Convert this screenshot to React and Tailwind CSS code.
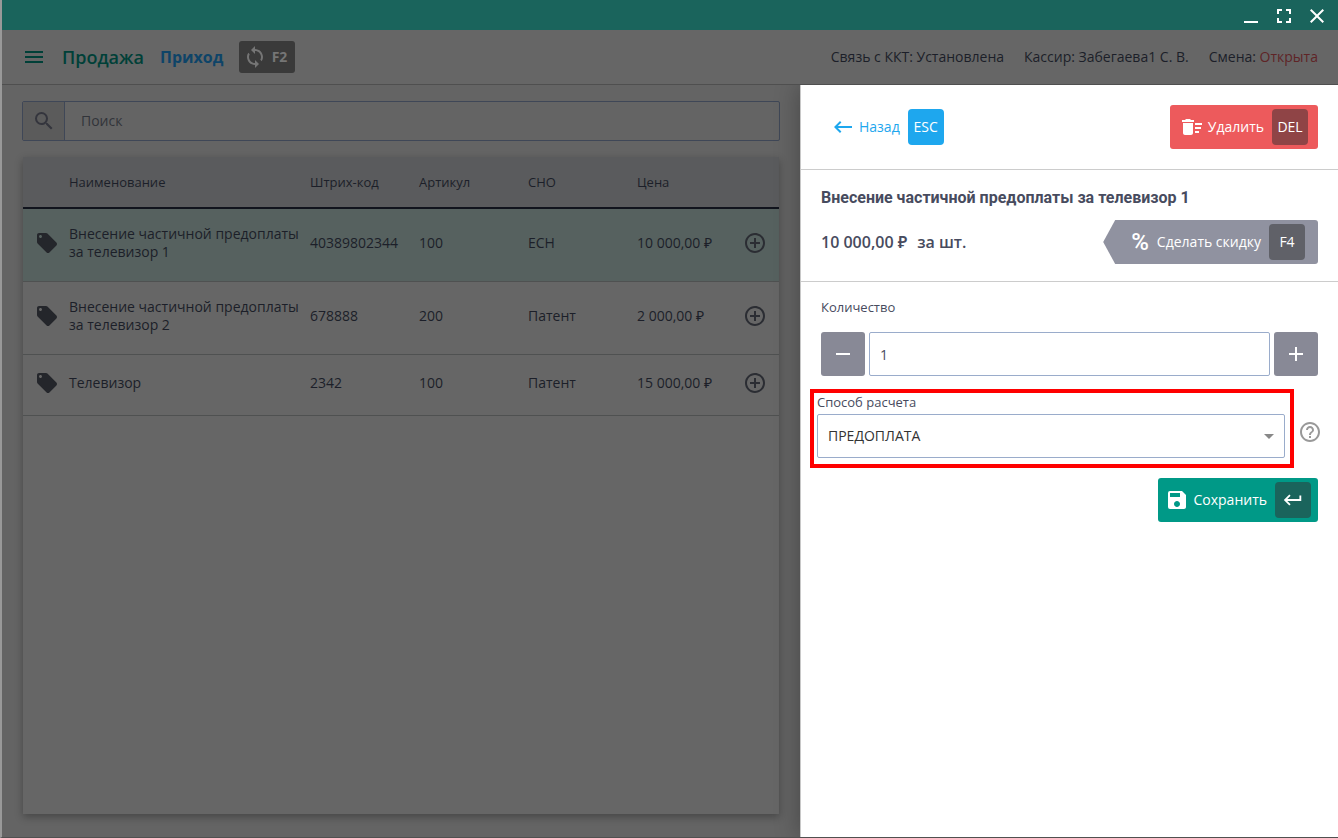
import {
  MdAddCircleOutline,
  MdArrowDropDown,
  MdClose,
  MdDeleteSweep,
  MdFullscreen,
  MdHelpOutline,
  MdKeyboardBackspace,
  MdKeyboardReturn,
  MdLocalOffer,
  MdLoop,
  MdMenu,
  MdSave,
  MdSearch,
} from "react-icons/md";

const products = [
  { id: 1, name: "Внесение частичной предоплаты за телевизор 1", barcode: "40389802344", article: "100", tax: "ЕСН", price: "10 000,00 ₽" },
  { id: 2, name: "Внесение частичной предоплаты за телевизор 2", barcode: "678888", article: "200", tax: "Патент", price: "2 000,00 ₽" },
  { id: 3, name: "Телевизор", barcode: "2342", article: "100", tax: "Патент", price: "15 000,00 ₽" },
];

const keyClass = "flex h-9 w-9 items-center justify-center rounded";
const stepBtn = "flex h-11 w-11 shrink-0 items-center justify-center rounded-[3px] bg-[#888996] text-white";

function TitleBar() {
  return (
    <div className="flex h-[30px] items-center justify-end gap-[9px] bg-[#1a645c] pt-0.5 pr-[9px] text-white">
      <button aria-label="Свернуть">
        <svg width="24" height="24" viewBox="0 0 24 24" fill="currentColor">
          <path d="M5 17h14v2H5z" />
        </svg>
      </button>
      <button aria-label="Развернуть">
        <MdFullscreen size={24} />
      </button>
      <button aria-label="Закрыть">
        <MdClose size={24} />
      </button>
    </div>
  );
}

function Header() {
  return (
    <header className="flex h-[55px] items-center justify-between border-b border-[#4f4f4f] pr-5 pl-5">
      <div className="flex items-center">
        <button aria-label="Меню" className="text-[#004038]">
          <MdMenu size={24} />
        </button>
        <h1 className="ml-4 text-lg font-semibold text-[#004038]">Продажа</h1>
        <a href="#income" className="ml-4 text-base font-bold text-[#0e4468]">
          Приход
        </a>
        <button className="ml-4 flex h-8 w-14 items-center justify-between rounded-[3px] bg-[#3a3a3a] pr-2 pl-1 text-sm font-bold text-[#757575]">
          <MdLoop size={24} />
          F2
        </button>
      </div>
      <div className="flex gap-5 text-sm text-[#1c1f29]">
        <span>Связь с ККТ: Установлена</span>
        <span>Кассир: Забегаева1 С. В.</span>
        <span>
          Смена: <span className="text-[#5f2426]">Открыта</span>
        </span>
      </div>
    </header>
  );
}

function Products() {
  return (
    <section className="flex min-w-0 flex-1 flex-col px-5 pt-4 pb-[23px]">
      <label className="flex h-10 rounded-[2px] border border-[#3f4757]">
        <span className="flex w-[42px] items-center justify-center border-r border-[#3f4757] bg-[#5b5b5b] text-[#34353d]">
          <MdSearch size={24} />
        </span>
        <input
          type="text"
          placeholder="Поиск"
          aria-label="Поиск"
          className="min-w-0 flex-1 px-4 text-sm outline-none placeholder:text-[#32343a]"
        />
      </label>

      <div className="mx-px mt-4 flex-1 bg-[#666] shadow-[0_3px_8px_rgba(0,0,0,0.3)]">
        <table className="w-full table-fixed text-left text-sm leading-[18px] text-[#1c1f29]">
          <colgroup>
            <col className="w-[46px]" />
            <col />
            <col className="w-[109px]" />
            <col className="w-[109px]" />
            <col className="w-[109px]" />
            <col className="w-[108px]" />
            <col className="w-[34px]" />
          </colgroup>
          <thead>
            <tr className="h-[51px] border-b-2 border-[#11141d] bg-[#5a5b5d] text-[13px]">
              <th></th>
              <th className="font-normal">Наименование</th>
              <th className="font-normal">Штрих-код</th>
              <th className="font-normal">Артикул</th>
              <th className="font-normal">СНО</th>
              <th className="font-normal">Цена</th>
              <th></th>
            </tr>
          </thead>
          <tbody>
            {products.map((item) => (
              <tr key={item.id} className="border-b border-[#4f5151] first:bg-[#56615f]">
                <td className="pt-4 pb-5 pl-3 text-[#24262b]">
                  <MdLocalOffer size={24} />
                </td>
                <td className="pt-4 pb-5">{item.name}</td>
                <td className="pt-4 pb-5">{item.barcode}</td>
                <td className="pt-4 pb-5">{item.article}</td>
                <td className="pt-4 pb-5">{item.tax}</td>
                <td className="pt-4 pb-5">{item.price}</td>
                <td className="pt-4 pb-5">
                  <button aria-label="Добавить" className="-ml-0.5 block text-[#2b2d33]">
                    <MdAddCircleOutline size={24} />
                  </button>
                </td>
              </tr>
            ))}
          </tbody>
        </table>
      </div>
    </section>
  );
}

function ItemPanel() {
  return (
    <aside className="w-[538px] shrink-0 border-l border-[#c8c8c8] bg-white text-sm text-[#474b5e] shadow-[0_0_24px_rgba(0,0,0,0.3)]">
      <div className="flex h-[85px] items-center justify-between border-b border-[#ccc] px-5">
        <button className="flex items-center pl-2.5 text-[#1ea7ee]">
          <MdKeyboardBackspace size={24} />
          <span className="mr-2 ml-1">Назад</span>
          <kbd className={`${keyClass} bg-[#1ea7ee] font-[inherit] text-white`}>ESC</kbd>
        </button>
        <button className="flex h-11 items-center rounded-[3px] bg-[#ed5a5c] pr-2.5 pl-2.5 text-white">
          <MdDeleteSweep size={24} />
          <span className="mr-2 ml-1">Удалить</span>
          <kbd className={`${keyClass} bg-[#8f4446] font-[inherit]`}>DEL</kbd>
        </button>
      </div>

      <div className="border-b border-[#ccc] pt-4 pb-[17px] pl-5">
        <h2 className="font-[Roboto] text-base leading-6 font-bold">Внесение частичной предоплаты за телевизор 1</h2>
        <div className="mt-2.5 flex items-center justify-between pr-5">
          <p className="text-base font-semibold">
            10 000,00 ₽<span className="ml-2.5">за шт.</span>
          </p>
          <button className="flex h-11 items-center rounded-r-[3px] bg-[#9092a0] pr-[13px] pl-7 text-white [clip-path:polygon(12px_0,100%_0,100%_100%,12px_100%,0_50%)]">
            <span className="font-[Roboto] text-2xl font-medium">%</span>
            <span className="mr-2 ml-2">Сделать скидку</span>
            <kbd className={`${keyClass} bg-[#606168] font-[inherit]`}>F4</kbd>
          </button>
        </div>
      </div>

      <form onSubmit={(e) => e.preventDefault()}>
        <div className="px-5 pt-4">
          <label htmlFor="quantity" className="block text-[13px] leading-[18px]">
            Количество
          </label>
          <div className="mt-4 flex gap-1">
            <button type="button" aria-label="Уменьшить" className={stepBtn}>
              <svg width="24" height="24" viewBox="0 0 24 24" fill="currentColor">
                <path d="M5 11h14v2H5z" />
              </svg>
            </button>
            <input
              id="quantity"
              type="text"
              defaultValue="1"
              className="h-11 min-w-0 flex-1 rounded-[2px] border border-[#9aaccb] px-2.5 outline-none"
            />
            <button type="button" aria-label="Увеличить" className={stepBtn}>
              <svg width="24" height="24" viewBox="0 0 24 24" fill="currentColor">
                <path d="M5 11h6V5h2v6h6v2h-6v6h-2v-6H5z" />
              </svg>
            </button>
          </div>
        </div>

        <div className="mt-[13px] flex items-center gap-1 pr-4 pl-[9px]">
          <div className="flex-1 border-4 border-[#f00] pr-[5px] pb-[6px] pl-[3px]">
            <label htmlFor="payment" className="mb-[3px] block text-[13px] leading-[18px]">
              Способ расчета
            </label>
            <div className="relative">
              <select
                id="payment"
                className="h-11 w-full appearance-none rounded-[2px] border border-[#9aaccb] px-2.5 text-[#333] outline-none"
              >
                <option>ПРЕДОПЛАТА</option>
              </select>
              <MdArrowDropDown size={24} className="pointer-events-none absolute top-2.5 right-1 text-[#888]" />
            </div>
          </div>
          <button type="button" aria-label="Справка" className="pt-1.5 text-[#999]">
            <MdHelpOutline size={24} />
          </button>
        </div>

        <div className="mt-2.5 flex justify-end px-5">
          <button type="submit" className="flex h-11 items-center rounded-[3px] bg-[#009987] pr-[7px] pl-[7px] text-white">
            <MdSave size={24} />
            <span className="mr-2 ml-1">Сохранить</span>
            <kbd className={`${keyClass} bg-[#1a645c]`}>
              <MdKeyboardReturn size={22} />
            </kbd>
          </button>
        </div>
      </form>
    </aside>
  );
}

function App() {
  return (
    <div className="flex min-h-screen flex-col border-b border-l-2 border-b-[#505050] border-l-[#999] bg-[#666] font-['Open_Sans','Noto_Sans',sans-serif]">
      <TitleBar />
      <Header />
      <main className="flex flex-1 overflow-hidden bg-[#646464]">
        <Products />
        <ItemPanel />
      </main>
    </div>
  );
}

export default App;
